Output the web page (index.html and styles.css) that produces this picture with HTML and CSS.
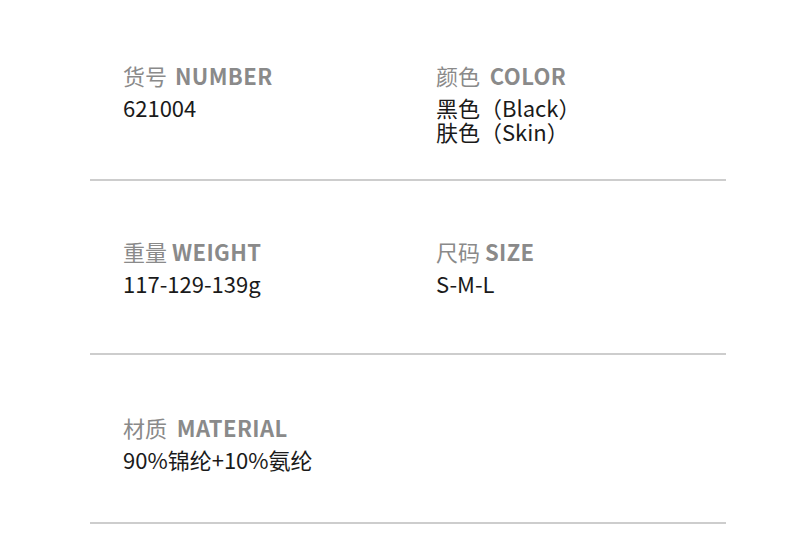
FILE: index.html
```html
<!DOCTYPE html>
<html lang="zh">
<head>
<meta charset="utf-8">
<link rel="stylesheet" href="styles.css">
</head>
<body>
<div class="sheet">
  <section class="row row-1">
    <div class="cell">
      <div class="label">货号 <b class="wide">NUMBER</b></div>
      <div class="value">621004</div>
    </div>
    <div class="cell">
      <div class="label">颜色&nbsp; <b>COLOR</b></div>
      <div class="value"><span class="line">黑色（Black）</span><span class="line">肤色（Skin）</span></div>
    </div>
  </section>
  <section class="row row-2">
    <div class="cell">
      <div class="label">重量 <b>WEIGHT</b></div>
      <div class="value">117-129-139g</div>
    </div>
    <div class="cell">
      <div class="label">尺码 <b>SIZE</b></div>
      <div class="value">S-M-L</div>
    </div>
  </section>
  <section class="row row-3">
    <div class="cell">
      <div class="label">材质&nbsp; <b>MATERIAL</b></div>
      <div class="value">90%锦纶+10%氨纶</div>
    </div>
  </section>
</div>
</body>
</html>
```
FILE: styles.css
```css
html, body {
  margin: 0;
  padding: 0;
  background: #fff;
}
body {
  font-family: "Noto Sans CJK SC", "Noto Sans", sans-serif;
  color: #1a1a1a;
}
.sheet {
  margin-left: 90px;
  width: 636px;
}
.row {
  display: grid;
  grid-template-columns: 313px 1fr;
  padding-left: 33px;
  border-bottom: 2px solid #cdcdcd;
  box-sizing: border-box;
}
.row-1 { padding-top: 60px; height: 181px; }
.row-2 { padding-top: 55px; height: 174px; }
.row-3 { padding-top: 57px; height: 169px; }
.label {
  font-size: 22px;
  line-height: 30px;
  color: #8a8a8a;
  font-weight: 400;
  white-space: nowrap;
}
.label b {
  font-weight: 700;
  letter-spacing: 0.4px;
}
.label b.wide {
  margin-left: 3px;
}
.value {
  margin-top: 5px;
  font-size: 22px;
  line-height: 24px;
  color: #1a1a1a;
  white-space: nowrap;
}
.line {
  display: block;
  height: 24px;
}
```
